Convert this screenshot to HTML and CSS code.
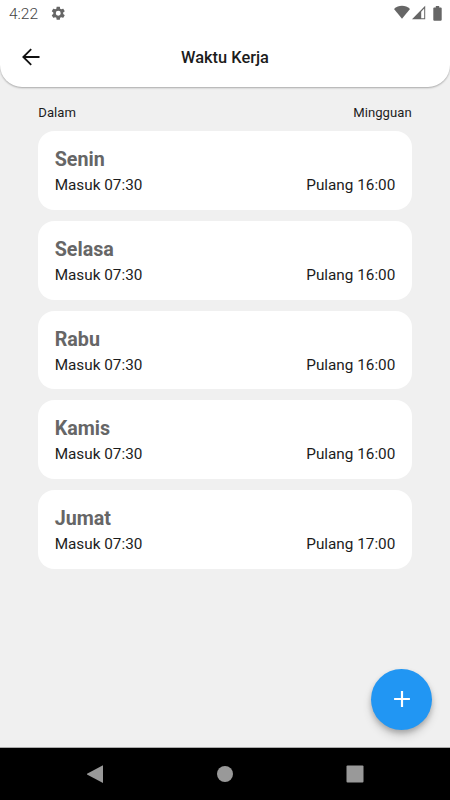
FILE: index.html
```html
<!DOCTYPE html>
<html lang="id">

<head>
	<meta charset="UTF-8">
	<meta name="viewport" content="width=device-width, initial-scale=1.0">
	<title>Waktu Kerja</title>
	<link rel="stylesheet" href="styles.css">
</head>

<body>

	<!-- Status bar and app bar -->
	<header>
		<div class="status-bar">
			<span class="clock">4:22</span>
			<svg class="gear" viewBox="0 0 24 24"><path d="M19.14 12.94c.04-.3.06-.61.06-.94 0-.32-.02-.64-.07-.94l2.03-1.58c.18-.14.23-.41.12-.61l-1.92-3.32c-.12-.22-.37-.29-.59-.22l-2.39.96c-.5-.38-1.03-.7-1.62-.94l-.36-2.54c-.04-.24-.24-.41-.48-.41h-3.84c-.24 0-.43.17-.47.41l-.36 2.54c-.59.24-1.13.57-1.62.94l-2.39-.96c-.22-.08-.47 0-.59.22L2.74 8.87c-.12.21-.08.47.12.61l2.03 1.58c-.05.3-.09.63-.09.94s.02.64.07.94l-2.03 1.58c-.18.14-.23.41-.12.61l1.92 3.32c.12.22.37.29.59.22l2.39-.96c.5.38 1.03.7 1.62.94l.36 2.54c.05.24.24.41.48.41h3.84c.24 0 .44-.17.47-.41l.36-2.54c.59-.24 1.13-.56 1.62-.94l2.39.96c.22.08.47 0 .59-.22l1.92-3.32c.12-.22.07-.47-.12-.61l-2.01-1.58zM12 15.6A3.6 3.6 0 1 1 12 8.4a3.6 3.6 0 0 1 0 7.2z"/></svg>
			<div class="indicators">
				<svg width="16" height="14" viewBox="0 0 16 14"><path d="M8 12.8L0 3C2.3.8 5-.3 8-.3S13.7.8 16 3z"/></svg>
				<svg width="14" height="14" viewBox="0 0 14 14"><path d="M13.200-.3v13.600H0zM12.200 2.600L9.200 5.700v6.600h3z" fill-rule="evenodd"/></svg>
				<svg class="battery" width="9" height="15" viewBox="0 0 9 15"><path d="M2.8 0h3.4v1.4h1.6c.5 0 .9.4.9.9v11.500c0 .5-.4.9-.9.9H1.200c-.5 0-.9-.4-.9-.9V2.300c0-.5.4-.9.9-.9h1.600z"/></svg>
			</div>
		</div>
		<div class="app-bar">
			<button class="back" aria-label="Kembali">
				<svg width="26" height="26" viewBox="0 0 26 26"><path d="M21.500 13H5M13.200 5.200L5.300 13l7.900 7.900"/></svg>
			</button>
			<h1>Waktu Kerja</h1>
		</div>
	</header>

	<!-- Work hours -->
	<main>
		<div class="range">
			<span>Dalam</span>
			<span>Mingguan</span>
		</div>
		<div class="days">
			<section class="day">
				<h2>Senin</h2>
				<div class="hours"><span>Masuk 07:30</span><span>Pulang 16:00</span></div>
			</section>
			<section class="day">
				<h2>Selasa</h2>
				<div class="hours"><span>Masuk 07:30</span><span>Pulang 16:00</span></div>
			</section>
			<section class="day">
				<h2>Rabu</h2>
				<div class="hours"><span>Masuk 07:30</span><span>Pulang 16:00</span></div>
			</section>
			<section class="day">
				<h2>Kamis</h2>
				<div class="hours"><span>Masuk 07:30</span><span>Pulang 16:00</span></div>
			</section>
			<section class="day">
				<h2>Jumat</h2>
				<div class="hours"><span>Masuk 07:30</span><span>Pulang 17:00</span></div>
			</section>
		</div>
		<button class="fab" aria-label="Tambah">
			<svg width="26" height="26" viewBox="0 0 24 24"><path d="M19.300 13H13v6.300h-2V13H4.700v-2H11V4.700h2V11h6.300z"/></svg>
		</button>
	</main>

	<!-- System navigation -->
	<nav>
		<svg width="18" height="18" viewBox="0 0 18 18"><path d="M17 .3v17.600L1 9.500V8.700z"/></svg>
		<svg width="18" height="18" viewBox="0 0 18 18"><circle cx="9" cy="9" r="8"/></svg>
		<svg width="18" height="18" viewBox="0 0 18 18"><rect x=".5" y=".5" width="17" height="17" rx="1"/></svg>
	</nav>

</body>

</html>
```
FILE: styles.css
```css
* {
	box-sizing: border-box;
}

body {
	display: flex;
	flex-direction: column;
	height: 800px;
	margin: 0;
	overflow: hidden;
	font-family: Roboto, sans-serif;
	color: #1c1c1c;
	background-color: #f0f0f0;
}

h1,
h2 {
	margin: 0;
}

svg {
	display: block;
	flex: none;
	overflow: visible;
}

button {
	display: flex;
	align-items: center;
	justify-content: center;
	padding: 0;
	border: none;
	background: none;
	cursor: pointer;
}

header {
	height: 87px;
	background-color: #fff;
	border-radius: 0 0 22px 22px;
	box-shadow: 0 1px 2px rgba(0, 0, 0, 0.3);
}

.status-bar {
	display: flex;
	align-items: center;
	height: 27px;
	padding: 0 8px 0 9px;
	color: #444;
	fill: #666;
}

.clock {
	width: 41px;
	padding-top: 1px;
	font-size: 15.5px;
	font-weight: 300;
}

.gear {
	width: 16.5px;
	height: 16.5px;
}

.indicators {
	display: flex;
	gap: 2px;
	margin-left: auto;
}

.battery {
	margin-left: 5px;
}

.app-bar {
	display: grid;
	grid-template-columns: 61px 1fr 61px;
	align-items: center;
	height: 60px;
}

.back {
	height: 60px;
	fill: none;
	stroke: #111;
	stroke-width: 1.8;
}

.app-bar h1 {
	font-size: 16.4px;
	font-weight: 500;
	text-align: center;
}

main {
	position: relative;
	flex: 1;
	padding: 17px 38.3px 0;
}

.range {
	display: flex;
	justify-content: space-between;
	font-size: 13.1px;
	line-height: 18px;
	letter-spacing: 0.05px;
}

.days {
	display: flex;
	flex-direction: column;
	gap: 11px;
	margin-top: 9.3px;
}

.day {
	height: 78.7px;
	padding: 17px 16.4px 0;
	background-color: #fff;
	border-radius: 16.4px;
}

.day h2 {
	font-size: 19.7px;
	line-height: 24px;
	font-weight: 700;
	color: #666;
}

.hours {
	display: flex;
	justify-content: space-between;
	margin-top: 3px;
	font-size: 15.3px;
	line-height: 20px;
}

.fab {
	position: absolute;
	right: 18px;
	bottom: 17.5px;
	width: 61px;
	height: 61px;
	border-radius: 50%;
	background-color: #2196f3;
	fill: #fff;
	box-shadow: 0 3px 5px rgba(0, 0, 0, 0.2), 0 6px 10px rgba(0, 0, 0, 0.14);
}

nav {
	display: flex;
	align-items: center;
	justify-content: space-between;
	height: 53px;
	padding: 0 86px;
	border-top: 1px solid #aaa;
	background-color: #000;
	fill: #999;
}
```
